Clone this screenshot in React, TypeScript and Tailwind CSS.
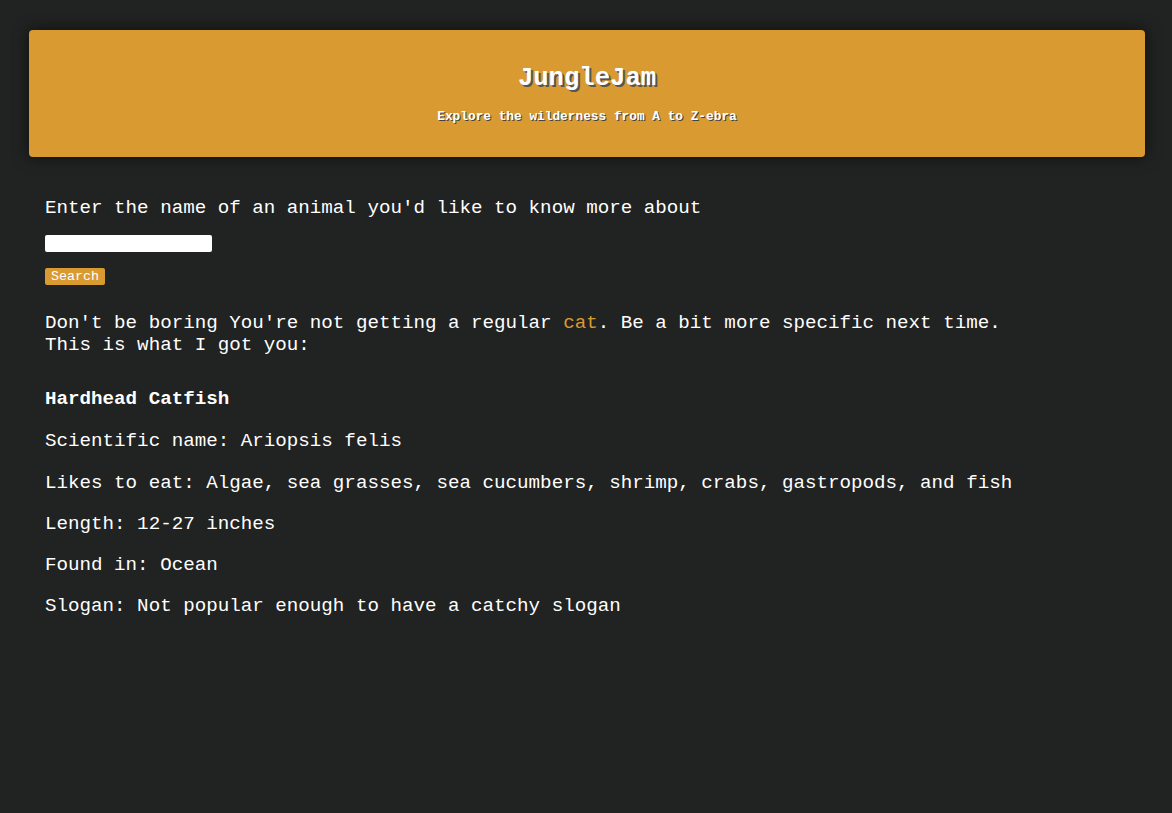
export default function App() {
  return (
    <div
      className="min-h-[813px] bg-[#212222] text-white pt-[30px]"
      style={{ fontFamily: '"Liberation Mono", "Courier New", monospace' }}
    >
      {/* Header */}
      <header className="ml-[29px] mr-[27px] h-[127px] rounded bg-[#d99a32] shadow-[0_0_16px_rgba(0,0,0,0.6)] flex flex-col items-center">
        <h1 className="mt-[34px] text-[25.6px] leading-[30px] font-bold [text-shadow:2px_2px_0_#555]">
          JungleJam
        </h1>
        <p className="mt-[15px] text-[12.8px] leading-[15px] font-bold [text-shadow:1px_1px_0_#444]">
          Explore the wilderness from A to Z-ebra
        </p>
      </header>

      {/* Content */}
      <main className="px-[45px] pt-[40px] text-[19.2px] leading-[22px]">
        <p>Enter the name of an animal you'd like to know more about</p>
        <input
          type="text"
          className="block mt-[16px] w-[167px] h-[17px] bg-white rounded-[2px] text-black text-xs outline-none"
        />
        <button className="block mt-[16px] h-[17px] px-[6px] bg-[#d99a32] rounded-[2px] text-[13.3px] leading-[15px] text-white">
          Search
        </button>

        <p className="mt-[27px]">
          Don't be boring You're not getting a regular{" "}
          <span className="text-[#d99a32]">cat</span>. Be a bit more specific next time.
          <br />
          This is what I got you:
        </p>

        <h2 className="mt-[32px] font-bold">Hardhead Catfish</h2>
        <p className="mt-[20px]">Scientific name: Ariopsis felis</p>
        <p className="mt-[20px]">
          Likes to eat: Algae, sea grasses, sea cucumbers, shrimp, crabs, gastropods, and fish
        </p>
        <p className="mt-[19px]">Length: 12-27 inches</p>
        <p className="mt-[19px]">Found in: Ocean</p>
        <p className="mt-[19px]">Slogan: Not popular enough to have a catchy slogan</p>
      </main>
    </div>
  );
}
